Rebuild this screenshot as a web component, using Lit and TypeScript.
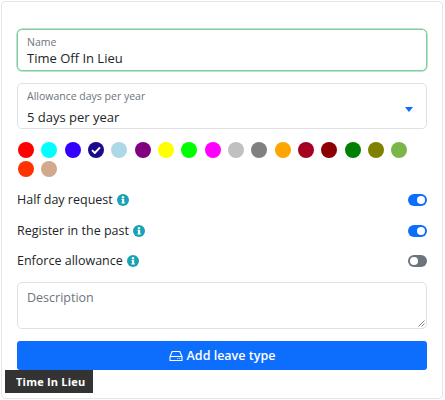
import { LitElement, html, css, svg } from "lit";
import { customElement } from "lit/decorators.js";

const COLORS = ["#ff0000","#00ffff","#3300ff","#1a0a8c","#add8e6","#800080","#ffff00","#00ff00","#ff00ff","#c0c0c0","#808080","#ffa500","#a50021","#8b0000","#008000","#808000","#7ab648","#ff3300","#d2a98c"];
const SELECTED = 3;

@customElement("app-root")
export class AppRoot extends LitElement {
  static styles = css`
    :host { display: block; width: 445px; height: 400px; font-family: "Open Sans", sans-serif; color: #212529; background: #fff; box-sizing: border-box; padding: 1px 2px 1px 1px; }
    * { box-sizing: border-box; }
    .card { position: relative; height: 398px; border: 1px solid #e6e6e6; border-radius: 4px; padding: 27px 15px 0 15px; background: #fff; }
    .field { border: 1px solid #dfe1e4; border-radius: 5px; padding: 0 9px; position: relative; }
    .name { height: 42px; border-color: #7fcb9c; box-shadow: 0 0 0 .5px #7fcb9c; padding-top: 5px; }
    .allow { height: 46px; margin-top: 12px; padding-top: 5px; }
    .small { display: block; font-size: 10.5px; line-height: 14px; color: #6c757d; }
    .value { display: block; font-size: 13px; line-height: 18px; }
    .allow .value { margin-top: 5px; }
    .caret { position: absolute; right: 13px; top: 23px; width: 8px; height: 5px; }
    .colors { display: flex; flex-wrap: wrap; column-gap: 7.33px; row-gap: 2.5px; margin-top: 13px; padding-left: 1px; width: 410px; height: 35px; }
    .dot { width: 16px; height: 16px; border-radius: 50%; display: flex; align-items: center; justify-content: center; }
    .dot svg { width: 10px; height: 8px; }
    .rows { margin-top: 14px; display: flex; flex-direction: column; gap: 12.5px; }
    .row { height: 18px; display: flex; align-items: center; font-size: 12.5px; line-height: 18px; }
    .info { width: 12px; height: 12px; margin-left: 4px; flex: none; }
    .toggle { margin-left: auto; width: 19px; height: 12px; border-radius: 6px; background: #0d6efd; position: relative; margin-right: 0; }
    .toggle::after { content: ""; position: absolute; top: 2px; right: 2px; width: 8px; height: 8px; border-radius: 50%; background: #fff; }
    .toggle.off { background: #6c757d; }
    .toggle.off::after { right: auto; left: 2px; }
    .desc { height: 47px; margin-top: 12px; padding-top: 6px; font-size: 12.5px; line-height: 18px; color: #6c757d; }
    .grip { position: absolute; right: 1px; bottom: 1px; width: 7px; height: 7px; }
    .btn { height: 29px; margin-top: 12px; width: 100%; border: 0; border-radius: 3px; background: #0d6efd; color: #fff; font: 600 12.5px/18px "Open Sans", sans-serif; display: flex; align-items: center; justify-content: center; gap: 4px; padding: 0; }
    .btn svg { width: 14px; height: 12px; }
    .tag { position: absolute; left: 3px; top: 368px; width: 88px; height: 23px; background: #333; color: #fff; font-size: 11px; font-weight: 700; line-height: 23px; padding-left: 11px; letter-spacing: .2px; }
  `;

  private info() {
    return html`<svg class="info" viewBox="0 0 12 12"><circle cx="6" cy="6" r="6" fill="#17a2b8"/><rect x="5" y="5" width="2.2" height="4.2" fill="#fff"/><rect x="4.3" y="8.4" width="3.6" height="1" fill="#fff"/><rect x="4.5" y="5" width="1" height="1" fill="#fff"/><circle cx="6" cy="3.3" r="1.2" fill="#fff"/></svg>`;
  }

  render() {
    const rows = [
      ["Half day request", true],
      ["Register in the past", true],
      ["Enforce allowance", false],
    ] as const;
    return html`
      <div class="card">
        <div class="field name">
          <span class="small">Name</span>
          <span class="value">Time Off In Lieu</span>
        </div>
        <div class="field allow">
          <span class="small">Allowance days per year</span>
          <span class="value">5 days per year</span>
          <svg class="caret" viewBox="0 0 8 5"><path d="M0 0H8L4 5Z" fill="#0d6efd"/></svg>
        </div>
        <div class="colors">
          ${COLORS.map((c, i) => html`<div class="dot" style="background:${c}">
            ${i === SELECTED ? svg`<svg viewBox="0 0 10 8"><path d="M1 4.2L3.8 7L9 1.4" fill="none" stroke="#fff" stroke-width="1.9"/></svg>` : ""}
          </div>`)}
        </div>
        <div class="rows">
          ${rows.map(([t, on]) => html`<div class="row">${t}${this.info()}<div class="toggle ${on ? "" : "off"}"></div></div>`)}
        </div>
        <div class="field desc">Description
          <svg class="grip" viewBox="0 0 7 7"><path d="M0.5 6.5L6.5 0.5M3.5 6.5L6.5 3.5" stroke="#888" stroke-width="1" fill="none"/></svg>
        </div>
        <button class="btn">
          <svg viewBox="0 0 14 12" fill="none" stroke="#fff" stroke-width="1.1"><path d="M3.2 1.5H10.8L13 6.5V10.5H1V6.5Z"/><path d="M1 6.5H13"/><circle cx="10.8" cy="8.5" r=".6" fill="#fff" stroke="none"/><circle cx="8.8" cy="8.5" r=".6" fill="#fff" stroke="none"/></svg>
          Add leave type
        </button>
        <div class="tag">Time In Lieu</div>
      </div>
    `;
  }
}
